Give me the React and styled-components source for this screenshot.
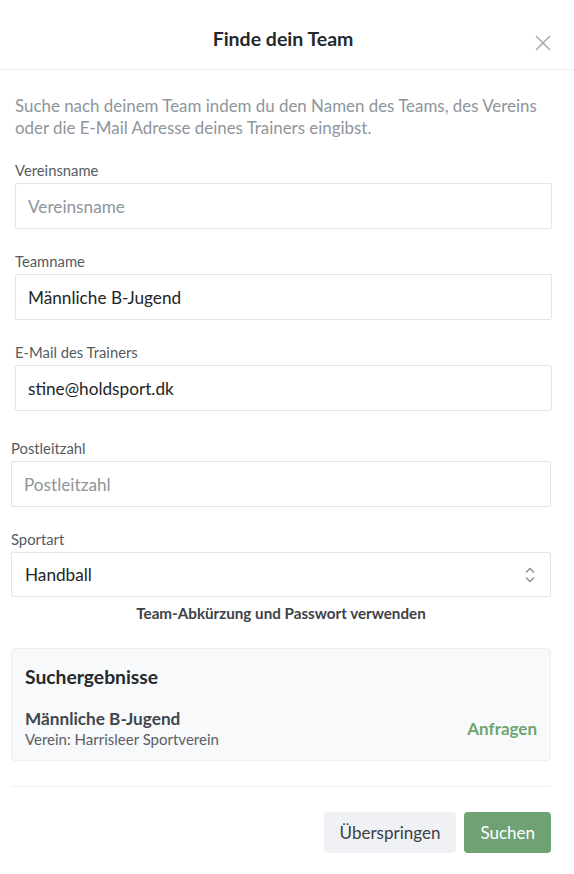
import React from 'react';
import styled, { createGlobalStyle } from 'styled-components';

const GlobalStyle = createGlobalStyle`
  html, body {
    margin: 0;
    padding: 0;
    background: #ffffff;
    font-family: Lato, "Open Sans", "Liberation Sans", sans-serif;
    -webkit-font-smoothing: antialiased;
  }
  * { box-sizing: border-box; }
`;

const ChevronsIcon = () => (
  <svg width="12" height="20" viewBox="0 0 12 20" fill="none" stroke="#8f969c" strokeWidth="1.6" strokeLinecap="round" strokeLinejoin="round">
    <polyline points="2.5,7 6,3.5 9.5,7" />
    <polyline points="2.5,13 6,16.5 9.5,13" />
  </svg>
);

const CloseIcon = () => (
  <svg width="16" height="16" viewBox="0 0 16 16" fill="none" stroke="#a9adb1" strokeWidth="1.6" strokeLinecap="round">
    <line x1="1.5" y1="1.5" x2="14.5" y2="14.5" />
    <line x1="14.5" y1="1.5" x2="1.5" y2="14.5" />
  </svg>
);

const App = () => {
  return (
    <Modal>
      <GlobalStyle />
      <Header>
        <Title>Finde dein Team</Title>
        <CloseButton aria-label="Schließen">
          <CloseIcon />
        </CloseButton>
      </Header>

      <Section $left={15} $right={22}>
        <Intro>
          Suche nach deinem Team indem du den Namen des Teams, des Vereins
          oder die E-Mail Adresse deines Trainers eingibst.
        </Intro>
        <Field>
          <Label>Vereinsname</Label>
          <Input placeholder="Vereinsname" />
        </Field>
        <Field>
          <Label>Teamname</Label>
          <Input defaultValue="Männliche B-Jugend" />
        </Field>
        <Field>
          <Label>E-Mail des Trainers</Label>
          <Input defaultValue="stine@holdsport.dk" />
        </Field>
      </Section>

      <Section $left={11} $right={23} $top={5}>
        <Field>
          <Label>Postleitzahl</Label>
          <Input placeholder="Postleitzahl" />
        </Field>
        <Field $bottom={0}>
          <Label>Sportart</Label>
          <SelectBox>
            <span>Handball</span>
            <ChevronsIcon />
          </SelectBox>
        </Field>
        <AltLink>Team-Abkürzung und Passwort verwenden</AltLink>

        <Results>
          <ResultsTitle>Suchergebnisse</ResultsTitle>
          <ResultRow>
            <ResultText>
              <ResultName>Männliche B-Jugend</ResultName>
              <ResultClub>Verein: Harrisleer Sportverein</ResultClub>
            </ResultText>
            <RequestLink>Anfragen</RequestLink>
          </ResultRow>
        </Results>

        <Footer>
          <Button>Überspringen</Button>
          <Button $primary>Suchen</Button>
        </Footer>
      </Section>
    </Modal>
  );
};

export default App;

const Modal = styled.div`
  width: 574px;
  min-height: 874px;
  background: #ffffff;
`;

const Header = styled.div`
  position: relative;
  height: 70px;
  display: flex;
  align-items: center;
  justify-content: center;
  border-bottom: 1px solid #ebedef;
`;

const Title = styled.h1`
  margin: 0;
  font-size: 19.5px;
  font-weight: 700;
  color: #26292c;
  padding-right: 8px;
  padding-top: 8px;
`;

const CloseButton = styled.button`
  position: absolute;
  right: 23px;
  top: 35px;
  background: none;
  border: none;
  padding: 0;
  cursor: pointer;
  display: flex;
`;

const Section = styled.div`
  padding-top: ${(p) => p.$top ?? 0}px;
  padding-left: ${(p) => p.$left}px;
  padding-right: ${(p) => p.$right}px;
`;

const Intro = styled.p`
  margin: 0;
  padding-top: 25px;
  padding-bottom: 21px;
  font-size: 16.9px;
  line-height: 22px;
  color: #8e959b;
`;

const Field = styled.div`
  display: flex;
  flex-direction: column;
  margin-bottom: ${(p) => p.$bottom ?? 22}px;
`;

const Label = styled.label`
  font-size: 14.8px;
  line-height: 20px;
  color: #555b61;
  margin-bottom: 3px;
`;

const Input = styled.input`
  height: 46px;
  width: 100%;
  border: 1px solid #e3e5e7;
  border-radius: 2px;
  padding: 0 12px;
  font-family: inherit;
  font-size: 17.2px;
  color: #222528;
  background: #fff;
  outline: none;

  &::placeholder {
    color: #8e959b;
  }
`;

const SelectBox = styled.div`
  height: 45px;
  border: 1px solid #e3e5e7;
  border-radius: 2px;
  padding: 0 14px 0 13px;
  display: flex;
  align-items: center;
  justify-content: space-between;
  font-size: 17.2px;
  color: #222528;
`;

const AltLink = styled.div`
  margin-top: 6px;
  text-align: center;
  font-size: 15.2px;
  line-height: 20px;
  font-weight: 700;
  color: #3d4247;
  cursor: pointer;
`;

const Results = styled.div`
  margin-top: 25px;
  background: #f8f9fa;
  border: 1px solid #eceef0;
  border-radius: 4px;
  padding: 15px 13px 11px 13px;
`;

const ResultsTitle = styled.h2`
  margin: 0;
  font-size: 19.3px;
  line-height: 26px;
  font-weight: 700;
  color: #26292c;
`;

const ResultRow = styled.div`
  margin-top: 18px;
  display: flex;
  align-items: center;
  justify-content: space-between;
`;

const ResultText = styled.div`
  display: flex;
  flex-direction: column;
`;

const ResultName = styled.div`
  font-size: 17.2px;
  line-height: 21px;
  font-weight: 700;
  color: #41464b;
`;

const ResultClub = styled.div`
  font-size: 15px;
  line-height: 20px;
  color: #5a6066;
`;

const RequestLink = styled.div`
  font-size: 17px;
  font-weight: 700;
  color: #6ea56f;
  cursor: pointer;
`;

const Footer = styled.div`
  margin-top: 25px;
  border-top: 1px solid #eef0f2;
  padding-top: 25px;
  display: flex;
  justify-content: flex-end;
  gap: 8px;
`;

const Button = styled.button`
  height: 41px;
  padding: 0 16px;
  border: none;
  border-radius: 4px;
  font-family: inherit;
  font-size: 17px;
  cursor: pointer;
  background: ${(p) => (p.$primary ? '#6fa272' : '#eff1f4')};
  color: ${(p) => (p.$primary ? '#ffffff' : '#3a3f44')};
`;
